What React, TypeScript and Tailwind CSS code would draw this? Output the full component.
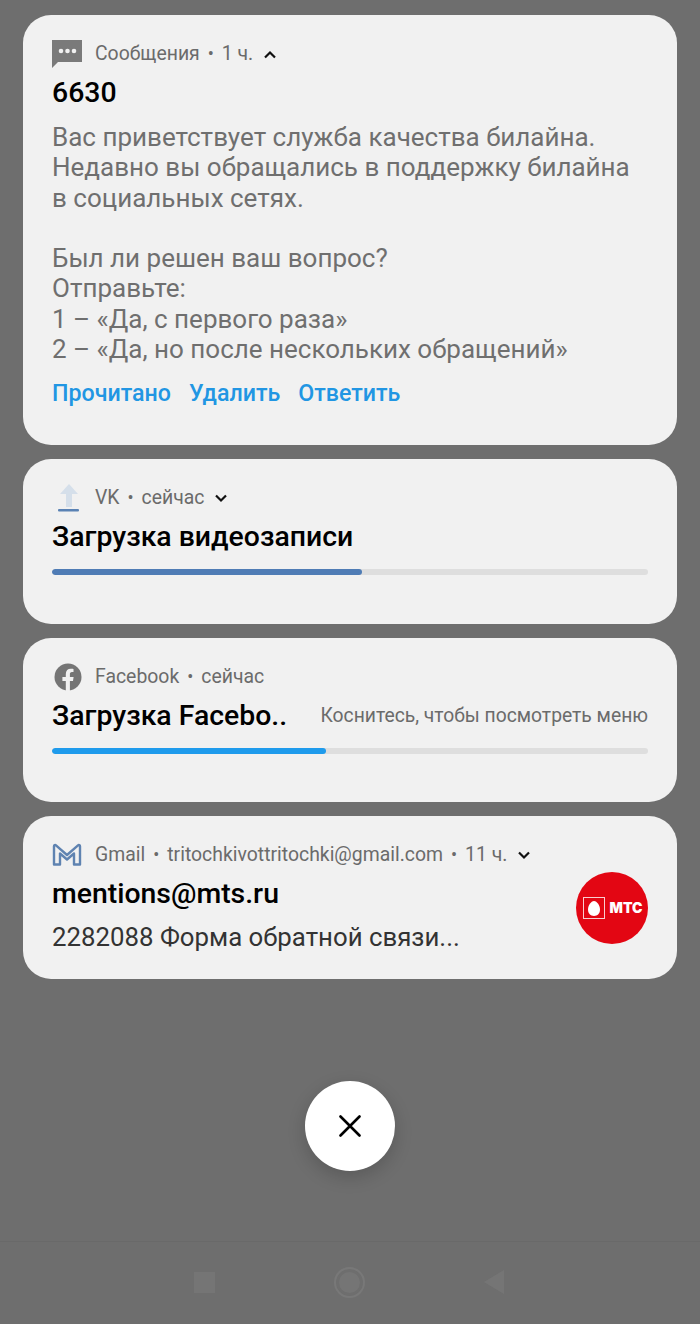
import type { ReactNode } from 'react'

const font = { fontFamily: 'Roboto, sans-serif' }

function Chevron({ up }: { up?: boolean }) {
  return (
    <svg viewBox="0 0 14 9" className="ml-[10px] h-[9px] w-[14px]" fill="none" stroke="#111" strokeWidth="2.2">
      <path d={up ? 'M2 7.5 7 2.5l5 5' : 'M2 1.5l5 5 5-5'} />
    </svg>
  )
}

function Header({ icon, parts, chevron }: { icon: ReactNode; parts: string[]; chevron?: 'up' | 'down' }) {
  return (
    <div className="flex h-[30px] items-center text-[19.4px] leading-[30px] text-[#6b6b6b]">
      <div className="flex w-[43px] shrink-0 items-center">{icon}</div>
      <span className="whitespace-nowrap">
        {parts.map((part, i) => (
          <span key={part}>
            {i > 0 && <span className="mx-[8px] text-[18px]">•</span>}
            {part}
          </span>
        ))}
      </span>
      {chevron && <Chevron up={chevron === 'up'} />}
    </div>
  )
}

function Progress({ percent, color }: { percent: number; color: string }) {
  return (
    <div className="h-[6px] overflow-hidden rounded-full bg-[#dedede]">
      <div className={`h-full rounded-full ${color}`} style={{ width: `${percent}%` }} />
    </div>
  )
}

function MessageIcon() {
  return (
    <svg viewBox="0 0 30 28" className="h-[28px] w-[30px]">
      <path d="M0 0h30v22H6l-6 6z" fill="#7a7a7a" />
      <circle cx="9" cy="11" r="2.300" fill="#f1f1f1" />
      <circle cx="15.500" cy="11" r="2.300" fill="#f1f1f1" />
      <circle cx="22" cy="11" r="2.300" fill="#f1f1f1" />
    </svg>
  )
}

function UploadIcon() {
  return (
    <svg viewBox="0 0 24 30" className="ml-[5px] h-[30px] w-[24px]">
      <path d="M12 1 3 11h6v13h6V11h6z" fill="#d5dfea" />
      <rect x="1" y="26" width="21" height="2.500" rx="1" fill="#5a82b4" />
    </svg>
  )
}

function FacebookIcon() {
  return (
    <svg viewBox="0 0 28 28" className="ml-[2px] h-[28px] w-[28px]">
      <circle cx="14" cy="14" r="13.500" fill="#757575" />
      <path
        d="M11.800 28V18H8.400v-4h3.400v-3c0-3.400 2-5.200 5-5.200 1.400 0 2.700.2 2.700.2v3.100H18c-1.600 0-2.100 1-2.100 2v2.900h3.700l-.6 4h-3.100v10z"
        fill="#f1f1f1"
      />
    </svg>
  )
}

function GmailIcon() {
  return (
    <svg viewBox="0 0 30 24" className="h-[24px] w-[30px]" fill="none">
      <path
        d="M2 21.500V3.200c0-1 1.200-1.500 2-.8L15 12 26 2.400c.8-.7 2-.2 2 .8v18.300h-6V10.500l-7 6-7-6v11z"
        stroke="#5f83b1"
        strokeWidth="2.400"
        strokeLinejoin="round"
      />
    </svg>
  )
}

function MtsLogo() {
  return (
    <div className="flex h-[72px] w-[72px] shrink-0 items-center justify-center gap-[5px] rounded-full bg-[#e30613] pl-[1px]">
      <div className="flex h-[22px] w-[22px] items-center justify-center border border-white/80">
        <svg viewBox="0 0 12 15" className="h-[15px] w-[12px]">
          <path d="M6 0c3 0 6 4.500 6 8.600C12 12.500 9.500 15 6 15s-6-2.500-6-6.400C0 4.500 3 0 6 0z" fill="#fff" />
        </svg>
      </div>
      <span className="text-[14px] font-black leading-none text-white" style={{ fontFamily: 'Inter, sans-serif' }}>
        МТС
      </span>
    </div>
  )
}

export default function App() {
  return (
    <div className="flex h-[1324px] w-[700px] flex-col overflow-hidden bg-[#6e6e6e]" style={font}>
      <div className="flex flex-col gap-[14px] px-[23px] pt-[15px]">
        <section className="h-[430px] rounded-[28px] bg-[#f1f1f1] px-[29px] pt-[24px]">
          <Header icon={<MessageIcon />} chevron="up" parts={['Сообщения', '1 ч.']} />
          <h2 className="mt-[8px] text-[28.400px] font-medium leading-[32px] text-black">6630</h2>
          <p className="mt-[13px] text-[26px] leading-[30.300px] text-[#6f6f6f]">
            Вас приветствует служба качества билайна.
            <br />
            Недавно вы обращались в поддержку билайна
            <br />
            в социальных сетях.
            <br />
            <br />
            Был ли решен ваш вопрос?
            <br />
            Отправьте:
            <br />1 – «Да, с первого раза»
            <br />2 – «Да, но после нескольких обращений»
          </p>
          <div className="mt-[15px] flex gap-[18px] text-[23.200px] font-medium leading-[28px] text-[#2196e3]">
            <span>Прочитано</span>
            <span>Удалить</span>
            <span>Ответить</span>
          </div>
        </section>

        <section className="h-[165px] rounded-[28px] bg-[#f1f1f1] px-[29px] pt-[24px]">
          <Header icon={<UploadIcon />} chevron="down" parts={['VK', 'сейчас']} />
          <h2 className="mt-[8px] text-[28.400px] font-medium leading-[32px] text-black">Загрузка видеозаписи</h2>
          <div className="mt-[16px]">
            <Progress percent={52} color="bg-[#4f7cb5]" />
          </div>
        </section>

        <section className="h-[164px] rounded-[28px] bg-[#f1f1f1] px-[29px] pt-[24px]">
          <Header icon={<FacebookIcon />} parts={['Facebook', 'сейчас']} />
          <div className="mt-[8px] flex h-[32px] items-center justify-between">
            <h2 className="text-[28.400px] font-medium leading-[32px] text-black">Загрузка Facebo..</h2>
            <span className="text-[19.300px] text-[#6b6b6b]">Коснитесь, чтобы посмотреть меню</span>
          </div>
          <div className="mt-[16px]">
            <Progress percent={46} color="bg-[#1f9bec]" />
          </div>
        </section>

        <section className="flex h-[163px] items-start rounded-[28px] bg-[#f1f1f1] px-[29px] pt-[24px]">
          <div className="min-w-0 flex-1">
            <Header icon={<GmailIcon />} chevron="down" parts={['Gmail', 'tritochkivottritochki@gmail.com', '11 ч.']} />
            <h2 className="mt-[8px] text-[28.400px] font-medium leading-[32px] text-black">mentions@mts.ru</h2>
            <p className="mt-[12px] text-[25.800px] leading-[30px] text-[#333]">2282088 Форма обратной связи...</p>
          </div>
          <div className="mt-[32px]">
            <MtsLogo />
          </div>
        </section>
      </div>

      <div className="mt-[102px] flex justify-center">
        <button className="flex h-[90px] w-[90px] items-center justify-center rounded-full bg-white shadow-[0_6px_18px_rgba(0,0,0,0.18)]">
          <svg viewBox="0 0 22 22" className="h-[22px] w-[22px]" stroke="#000" strokeWidth="2.600" strokeLinecap="round">
            <path d="M1.500 1.500l19 19M20.500 1.500l-19 19" />
          </svg>
        </button>
      </div>

      <nav className="mt-[70px] flex h-[84px] items-center border-t border-[#696969] pb-[2px]">
        <div className="flex w-full items-center justify-between pl-[194px] pr-[196px]">
          <div className="h-[21px] w-[21px] bg-[#757575]" />
          <div className="flex h-[31px] w-[31px] items-center justify-center rounded-full border-2 border-[#787878]">
            <div className="h-[21px] w-[21px] rounded-full bg-[#757575]" />
          </div>
          <svg viewBox="0 0 20 24" className="h-[24px] w-[20px]">
            <path d="M20 0v24L0 12z" fill="#757575" />
          </svg>
        </div>
      </nav>
    </div>
  )
}
